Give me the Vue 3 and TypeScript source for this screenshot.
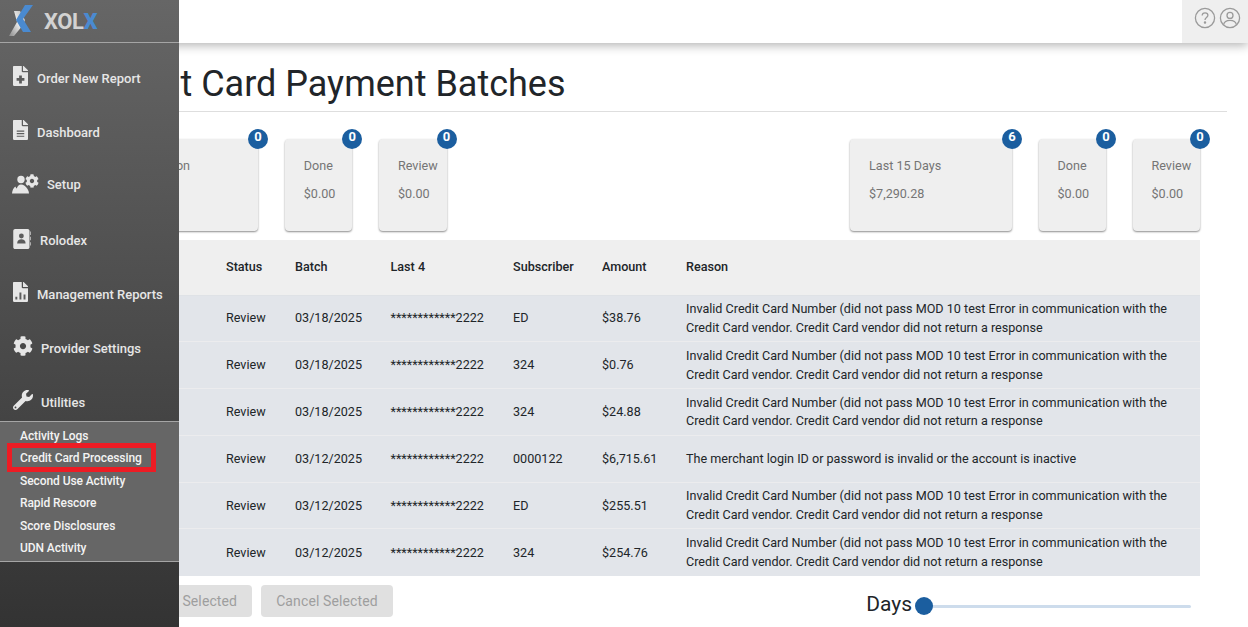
<script setup lang="ts">
interface Row { status: string; batch: string; last4: string; subscriber: string; amount: string; reason: string[] }
const long = ['Invalid Credit Card Number (did not pass MOD 10 test Error in communication with the', 'Credit Card vendor. Credit Card vendor did not return a response']
const rows: Row[] = [
  { status: 'Review', batch: '03/18/2025', last4: '************2222', subscriber: 'ED', amount: '$38.76', reason: long },
  { status: 'Review', batch: '03/18/2025', last4: '************2222', subscriber: '324', amount: '$0.76', reason: long },
  { status: 'Review', batch: '03/18/2025', last4: '************2222', subscriber: '324', amount: '$24.88', reason: long },
  { status: 'Review', batch: '03/12/2025', last4: '************2222', subscriber: '0000122', amount: '$6,715.61', reason: ['The merchant login ID or password is invalid or the account is inactive'] },
  { status: 'Review', batch: '03/12/2025', last4: '************2222', subscriber: 'ED', amount: '$255.51', reason: long },
  { status: 'Review', batch: '03/12/2025', last4: '************2222', subscriber: '324', amount: '$254.76', reason: long },
]
const subItems = ['Activity Logs', 'Credit Card Processing', 'Second Use Activity', 'Rapid Rescore', 'Score Disclosures', 'UDN Activity']
const filePath = 'M224 136V0H24C10.7 0 0 10.7 0 24v464c0 13.3 10.7 24 24 24h336c13.3 0 24-10.7 24-24V160H248c-13.2 0-24-10.8-24-24zM384 122v6H256V0h6c6.400 0 12.500 2.500 17 7l98 98c4.500 4.500 7 10.600 7 17z'
const gear = 'M487.4 315.7l-42.6-24.6c4.3-23.2 4.3-47 0-70.2l42.6-24.6c4.9-2.8 7.1-8.6 5.5-14-11.1-35.6-30-67.8-54.7-94.6-3.8-4.1-10-5.1-14.8-2.3L380.8 110c-17.9-15.4-38.5-27.3-60.8-35.1V25.8c0-5.6-3.9-10.500-9.400-11.700-36.700-8.200-74.300-7.800-109.200 0-5.500 1.200-9.400 6.100-9.400 11.700V75c-22.200 7.900-42.800 19.800-60.800 35.100L88.700 85.500c-4.900-2.800-11-1.900-14.800 2.300-24.700 26.700-43.600 58.900-54.700 94.600-1.700 5.400.6 11.200 5.500 14L67.300 221c-4.300 23.200-4.300 47 0 70.200l-42.600 24.600c-4.900 2.800-7.100 8.600-5.500 14 11.100 35.600 30 67.800 54.700 94.600 3.800 4.100 10 5.100 14.800 2.300l42.600-24.600c17.900 15.400 38.500 27.300 60.800 35.100v49.200c0 5.600 3.900 10.500 9.400 11.700 36.700 8.200 74.300 7.800 109.200 0 5.500-1.200 9.400-6.100 9.400-11.700v-49.200c22.200-7.900 42.800-19.800 60.800-35.100l42.600 24.600c4.900 2.800 11 1.900 14.800-2.300 24.700-26.700 43.600-58.900 54.700-94.600 1.500-5.500-.7-11.300-5.600-14.100zM256 336c-44.100 0-80-35.900-80-80s35.900-80 80-80 80 35.900 80 80-35.900 80-80 80z'
</script>

<template>
  <div class="page">
    <aside class="sidebar">
      <div class="brand">
        <svg class="logo" width="26" height="34" viewBox="0 0 26 34">
          <defs>
            <linearGradient id="lg" x1="0" y1="1" x2="1" y2="0">
              <stop offset="0" stop-color="#8a8a8a" />
              <stop offset="0.55" stop-color="#ececec" />
              <stop offset="1" stop-color="#b5b5b5" />
            </linearGradient>
          </defs>
          <path d="M5 6h6l5 9-2 5L5 31H0l8-14z" fill="url(#lg)" />
          <path d="M16 0h8l-10 14 8 13h-8L7 15z" fill="#4a8ad0" />
        </svg>
        <span class="brand-text">XOL<b>X</b></span>
      </div>
      <nav class="nav">
        <a class="nav-item">
          <svg class="fi" viewBox="0 0 384 512"><path :d="filePath" /><path class="cut" d="M157 245h70v65h65v70h-65v65h-70v-65H92v-70h65z" /></svg>
          <span>Order New Report</span>
        </a>
        <a class="nav-item">
          <svg class="fi" viewBox="0 0 384 512"><path :d="filePath" /><path class="cut" d="M96 270h192v28H96zM96 335h192v28H96zM96 400h192v28H96z" /></svg>
          <span>Dashboard</span>
        </a>
        <a class="nav-item setup">
          <svg class="users" viewBox="0 0 27 20">
            <circle cx="9" cy="5.500" r="3.700" />
            <path d="M0 19.500c.3-3 1.500-5.800 3.300-7 .6 1.200 1 1.500 1.500 2 .5-2 2-4 4.200-4 2.500 0 5 1.800 6.500 4.500 1 1.500 1.500 3 1.500 4.500z" />
            <path transform="translate(13 0) scale(.0273)" :d="gear" />
          </svg>
          <span>Setup</span>
        </a>
        <a class="nav-item rolodex">
          <svg class="fb" viewBox="0 0 448 512">
            <path d="M48 0h320c26 0 48 22 48 48v416c0 26-22 48-48 48H48c-26 0-48-22-48-48V48C0 22 22 0 48 0z" />
            <path d="M432 64h16v88h-16zM432 200h16v88h-16zM432 336h16v88h-16z" />
            <circle class="cut" cx="208" cy="180" r="62" />
            <path class="cut" d="M100 370c0-70 48-105 108-105s108 35 108 105z" />
          </svg>
          <span>Rolodex</span>
        </a>
        <a class="nav-item">
          <svg class="fi" viewBox="0 0 384 512"><path :d="filePath" /><path class="cut" d="M60 380h50v70H60zM165 270h50v180h-50zM270 320h50v130h-50z" /></svg>
          <span>Management Reports</span>
        </a>
        <a class="nav-item">
          <svg class="gi" viewBox="0 0 512 512"><path :d="gear" /></svg>
          <span>Provider Settings</span>
        </a>
        <a class="nav-item">
          <svg class="gi" viewBox="0 0 512 512"><path d="M507.700 109.100c-2.200-9-13.500-12.100-20.100-5.500l-74.400 74.400-67.900-11.300-11.300-67.900 74.400-74.400c6.600-6.600 3.400-17.900-5.700-20.200-47.400-11.700-99.500.9-136.600 37.900-39.600 39.600-50.500 97.100-34 147.200L18.700 402.800c-25 25-25 65.500 0 90.500s65.500 25 90.500 0l213.200-213.200c50.100 16.700 107.500 5.700 147.400-34.200 37.100-37.100 49.700-89.300 37.900-136.800zM64 472c-13.300 0-24-10.700-24-24s10.700-24 24-24 24 10.700 24 24-10.700 24-24 24z" /></svg>
          <span>Utilities</span>
        </a>
      </nav>
      <ul class="submenu">
        <li v-for="(s, i) in subItems" :key="s" :class="{ marked: i === 1 }">{{ s }}</li>
      </ul>
    </aside>

    <header class="topbar">
      <div class="tools">
        <svg width="22" height="22" viewBox="0 0 22 22" fill="none" stroke="#9a9a9a" stroke-width="1.300">
          <circle cx="11" cy="11" r="9.600" />
          <path d="M8.200 8.600c0-1.700 1.300-2.800 2.900-2.800s2.800 1 2.800 2.500c0 2.300-2.900 2.300-2.900 4.700" />
          <circle cx="11" cy="15.600" r=".6" fill="#9a9a9a" />
        </svg>
        <svg width="22" height="22" viewBox="0 0 22 22" fill="none" stroke="#9a9a9a" stroke-width="1.300">
          <circle cx="11" cy="11" r="9.600" />
          <circle cx="11" cy="8.400" r="3" />
          <path d="M4.600 17.600c.6-3 3.200-4.300 6.400-4.300s5.800 1.300 6.400 4.300" />
        </svg>
      </div>
    </header>

    <main class="main">
      <h1 class="title">Credit Card Payment Batches</h1>
      <hr class="rule" />
      <div class="content">
        <section class="cards">
          <div class="group first">
            <div class="card wide"><i class="badge">0</i><p>Authorization</p><p class="val">$0.00</p></div>
            <div class="card"><i class="badge">0</i><p>Done</p><p class="val">$0.00</p></div>
            <div class="card"><i class="badge">0</i><p>Review</p><p class="val">$0.00</p></div>
          </div>
          <div class="group">
            <div class="card wide"><i class="badge">6</i><p>Last 15 Days</p><p class="val">$7,290.28</p></div>
            <div class="card"><i class="badge">0</i><p>Done</p><p class="val">$0.00</p></div>
            <div class="card"><i class="badge">0</i><p>Review</p><p class="val">$0.00</p></div>
          </div>
        </section>

        <table class="grid">
          <colgroup>
            <col class="c0" /><col class="c1" /><col class="c2" /><col class="c3" /><col class="c4" /><col class="c5" /><col />
          </colgroup>
          <thead>
            <tr><th></th><th>Status</th><th>Batch</th><th>Last 4</th><th>Subscriber</th><th>Amount</th><th>Reason</th></tr>
          </thead>
          <tbody>
            <tr v-for="(r, i) in rows" :key="i">
              <td></td>
              <td>{{ r.status }}</td>
              <td>{{ r.batch }}</td>
              <td>{{ r.last4 }}</td>
              <td>{{ r.subscriber }}</td>
              <td>{{ r.amount }}</td>
              <td><div v-for="l in r.reason" :key="l">{{ l }}</div></td>
            </tr>
          </tbody>
        </table>

        <div class="footer">
          <div class="actions">
            <button class="btn" disabled>Reprocess Selected</button>
            <button class="btn" disabled>Cancel Selected</button>
          </div>
          <div class="days">
            <span class="days-label">Days</span>
            <div class="track"><span class="thumb"></span></div>
          </div>
        </div>
      </div>
    </main>
  </div>
</template>

<style>
html, body { margin: 0; height: 100%; overflow: hidden; background: #fff; }
</style>

<style scoped>
.page { position: relative; width: 1248px; height: 627px; overflow: hidden; font-family: Roboto, "Liberation Sans", sans-serif; font-size: 12.600px; color: #212529; background: #fff; }
.sidebar { position: absolute; left: 0; top: 0; z-index: 3; width: 179px; height: 627px; background: linear-gradient(180deg, #666 0%, #333 100%); color: #e9e9e9; font-size: 13px; }
.brand { height: 42px; border-bottom: 1px solid #a5a5a5; display: flex; align-items: center; padding-left: 9px; }
.logo { flex: none; margin-top: 1px; }
.brand-text { margin-left: 9px; font-size: 22px; font-weight: 700; color: #d2d2d2; letter-spacing: -.4px; }
.brand-text b { color: #4a8ad0; }
.nav { display: flex; flex-direction: column; padding-top: 8px; }
.nav-item { display: flex; align-items: center; height: 54px; padding-left: 13px; font-weight: 500; color: #e6e6e6; fill: #e6e6e6; }
.setup span { position: relative; top: -2px; }
.fi { width: 15px; height: 20px; margin-right: 9px; flex: none; margin-top: -4px; }
.users { width: 27px; height: 20px; margin-right: 8px; margin-left: -1px; flex: none; margin-top: -4px; }
.fb { width: 18px; height: 20px; margin-right: 9px; flex: none; margin-top: -2px; }
.gi { width: 20px; height: 20px; margin-right: 8px; flex: none; margin-top: -4px; }
.cut { fill: #5c5c5c; }
.submenu { list-style: none; padding: 3px 0 3px 20px; margin: -8px 0 0; height: 141px; box-sizing: border-box; background: #666; border-top: 1px solid #a5a5a5; border-bottom: 1px solid #a5a5a5; font-size: 12px; letter-spacing: -.08px; }
.submenu li { position: relative; height: 22.400px; line-height: 22.400px; font-weight: 500; color: #f3f3f3; white-space: nowrap; }
.marked::after { content: ""; position: absolute; left: -13px; top: -4px; width: 139px; height: 19px; border: 5px solid #ed1c24; }

.topbar { height: 43px; background: #fff; box-shadow: 0 2px 10px rgba(0,0,0,.32); position: relative; z-index: 2; display: flex; justify-content: flex-end; }
.tools { width: 66px; background: #efefef; display: flex; gap: 3px; padding: 7px 0 0 12px; box-sizing: border-box; }

.main { padding-left: 48px; padding-right: 21px; }
.title { margin: 0; padding: 19px 0 0 49px; height: 49px; font-size: 36px; line-height: 44px; font-weight: 400; color: #212529; white-space: nowrap; }
.rule { margin: 0; border: 0; border-top: 1px solid #dedede; }
.content { padding-left: 48px; padding-right: 27px; }
.cards { display: flex; justify-content: space-between; padding-top: 27px; height: 101px; }
.group { display: flex; gap: 26.500px; }
.group.first { gap: 26.750px; }
.card { position: relative; width: 67.500px; height: 92px; box-sizing: border-box; padding: 19px 0 0 19px; background: #efefef; border-radius: 4px; box-shadow: 0 1px 2px rgba(0,0,0,.45); color: #757575; line-height: 15px; }
.card.wide { width: 162px; }
.card p { margin: 0; white-space: nowrap; }
.card .val { margin-top: 13px; }
.badge { position: absolute; right: -10px; top: -10px; width: 20px; height: 20px; border-radius: 50%; background: #1b5e9f; color: #fff; font-style: normal; font-weight: 700; font-size: 13px; text-align: center; line-height: 16px; }
.grid { width: 100%; border-collapse: collapse; table-layout: fixed; }
.c0 { width: 130px; } .c1 { width: 69px; } .c2 { width: 95.500px; } .c3 { width: 122.500px; } .c4 { width: 89px; } .c5 { width: 84px; }
.grid th { height: 55px; padding: 0 0 2px; box-sizing: border-box; background: #efefef; text-align: left; font-weight: 500; border-bottom: 1px solid #dfe2e6; }
.grid td { height: 46.800px; padding: 1px 0 0; background: #e2e5ea; line-height: 18.900px; border-bottom: 1px solid #ececee; white-space: nowrap; box-sizing: border-box; }
.grid tr:last-child td { border-bottom: 0; }
.footer { display: flex; justify-content: space-between; padding-top: 9px; padding-right: 9px; }
.actions { display: flex; gap: 9px; padding-left: 1px; }
.btn { height: 32px; padding: 0 15px; border: 0; border-radius: 4px; background: #e0e0e0; color: #9e9e9e; font: 400 14px Roboto, sans-serif; letter-spacing: .12px; }
.days { display: flex; align-items: center; height: 38px; }
.days-label { font-size: 21px; color: #212529; margin-right: 12px; }
.track { position: relative; width: 267px; height: 3px; margin-top: 5px; background: #cddcec; border-radius: 2px; }
.thumb { position: absolute; left: -9px; top: -8px; width: 18px; height: 18px; border-radius: 50%; background: #1b5e9f; }
</style>
